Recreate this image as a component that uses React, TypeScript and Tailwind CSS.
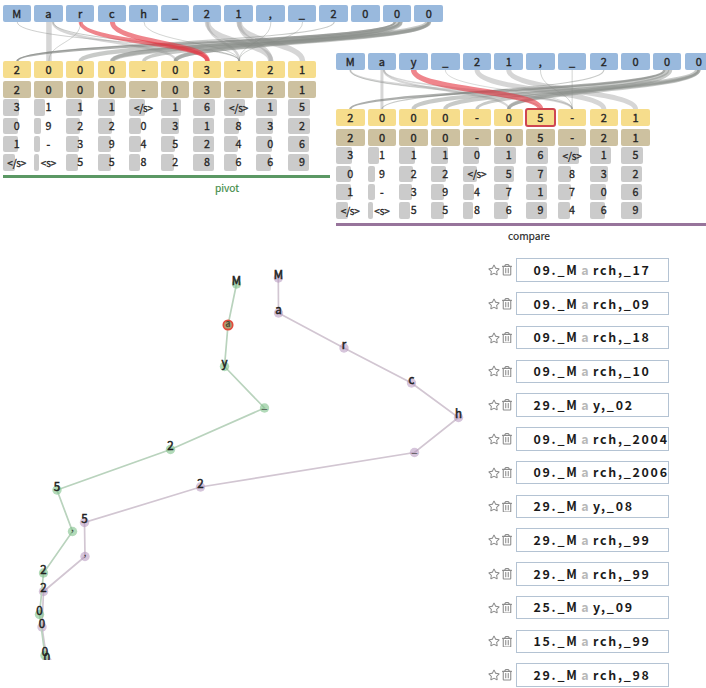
import React from "react";
import { FaRegStar, FaRegTrashAlt } from "react-icons/fa";

const PITCH = 31.7;
const HALF = 14.25;
const LINK_H = 39;

type Link = { from: number; to: number; w: number; tone?: "red" | "dark" | "light"; dx?: number };
type Cell = [string, number];

type PanelData = {
  source: string[];
  output: string[];
  beams: Cell[][];
  links: Link[];
  selected?: number;
};

const pivot: PanelData = {
  source: "March_21,_2000".split(""),
  output: "2000-03-21".split(""),
  beams: [
    [["3", 16.5], ["1", 10.7], ["1", 16], ["1", 17.5], ["</s>", 16], ["1", 20], ["6", 22], ["</s>", 21], ["1", 21], ["5", 22.3]],
    [["0", 15.5], ["9", 7.3], ["2", 13.7], ["2", 14], ["0", 12], ["3", 18.3], ["1", 21.7], ["8", 15], ["3", 17], ["2", 22]],
    [["1", 15.5], ["-", 6.3], ["3", 13.3], ["9", 13.3], ["4", 11.3], ["5", 14], ["2", 21.7], ["4", 14], ["0", 16], ["6", 21.7]],
    [["</s>", 12], ["<s>", 5.3], ["5", 11.7], ["5", 13.3], ["8", 10.7], ["2", 13], ["8", 21.3], ["6", 12.7], ["6", 15], ["9", 21.3]],
  ],
  links: [
    { from: 0, to: 7, w: 0.9 },
    { from: 1, to: 1, w: 5.5, tone: "light" },
    { from: 1, to: 5, w: 2.5, tone: "light", dx: 4 },
    { from: 1, to: 7, w: 1, dx: 4 },
    { from: 2, to: 1, w: 0.8 },
    { from: 4, to: 7, w: 0.8 },
    { from: 6, to: 8, w: 5.5, tone: "light" },
    { from: 6, to: 7, w: 2.5, tone: "light" },
    { from: 7, to: 9, w: 5.5, tone: "light" },
    { from: 7, to: 8, w: 4, tone: "light" },
    { from: 8, to: 7, w: 0.8 },
    { from: 9, to: 7, w: 0.8 },
    { from: 10, to: 0, w: 1.2 },
    { from: 12, to: 0, w: 2.4, tone: "dark", dx: -3 },
    { from: 12, to: 2, w: 4.4, dx: 0 },
    { from: 13, to: 3, w: 4.6, dx: -2 },
    { from: 12, to: 3, w: 3.6, dx: 3 },
    { from: 13, to: 4, w: 3.8 },
    { from: 13, to: 5, w: 3.6 },
    { from: 12, to: 5, w: 4.4, dx: 3 },
    { from: 2, to: 6, w: 4, tone: "red" },
    { from: 3, to: 6, w: 4.8, tone: "red" },
  ],
};

const compare: PanelData = {
  source: "May_21,_2000".split(""),
  output: "2000-05-21".split(""),
  beams: [
    [["3", 16], ["1", 11], ["1", 16], ["1", 16.5], ["0", 16], ["1", 21.5], ["6", 22], ["</s>", 21], ["1", 21], ["5", 22]],
    [["0", 15], ["9", 7.7], ["2", 13.7], ["2", 14.7], ["</s>", 14], ["5", 19.3], ["7", 21.3], ["8", 13], ["3", 18], ["2", 21]],
    [["1", 15], ["-", 7], ["3", 13], ["9", 13], ["4", 11], ["7", 15], ["1", 21], ["7", 13], ["0", 16], ["6", 21]],
    [["</s>", 12], ["<s>", 5.3], ["5", 11], ["5", 13], ["8", 10.7], ["6", 14], ["9", 21], ["4", 12.3], ["6", 15], ["9", 21]],
  ],
  selected: 6,
  links: [
    { from: 0, to: 7, w: 2, tone: "light" },
    { from: 0, to: 6, w: 0.8 },
    { from: 1, to: 1, w: 3, tone: "light" },
    { from: 1, to: 5, w: 2.2, tone: "light", dx: 2 },
    { from: 1, to: 7, w: 1.5, tone: "light", dx: 2 },
    { from: 3, to: 7, w: 0.7 },
    { from: 4, to: 8, w: 5, tone: "light" },
    { from: 5, to: 9, w: 5, tone: "light" },
    { from: 6, to: 7, w: 0.8 },
    { from: 7, to: 7, w: 0.8 },
    { from: 8, to: 1, w: 1.2 },
    { from: 10, to: 0, w: 2.4, tone: "dark", dx: -3 },
    { from: 10, to: 2, w: 4.2, dx: 0 },
    { from: 11, to: 3, w: 4.2, dx: -2 },
    { from: 11, to: 4, w: 3.4 },
    { from: 11, to: 5, w: 3.2 },
    { from: 10, to: 5, w: 4, dx: 3 },
    { from: 2, to: 6, w: 5.5, tone: "red" },
  ],
};

const toneStyle = {
  red: "stroke-[#e5343f] opacity-60",
  dark: "stroke-[#747874] opacity-60",
  light: "stroke-[#999999] opacity-40",
  mid: "stroke-[#858985] opacity-45",
};

function Links({ links }: { links: Link[] }) {
  return (
    <svg width="440" height={LINK_H} className="block shrink-0 overflow-visible" fill="none">
      {links.map((l, i) => {
        const a = l.from * PITCH + HALF + (l.dx ?? 0);
        const b = l.to * PITCH + HALF;
        return (
          <path
            key={i}
            d={`M${a},0C${a},${LINK_H * 0.53} ${b},${LINK_H * 0.53} ${b},${LINK_H}`}
            strokeWidth={l.w}
            className={toneStyle[l.tone ?? "mid"]}
          />
        );
      })}
    </svg>
  );
}

function Row({ tokens, color, selected }: { tokens: string[]; color: string; selected?: number }) {
  return (
    <div className="flex gap-[3.2px]">
      {tokens.map((t, i) => (
        <div
          key={i}
          className={`flex h-[17px] w-[28.5px] shrink-0 items-center justify-center rounded-[2px] text-[11px] leading-none [-webkit-text-stroke:0.35px] ${color} ${
            i === selected ? "outline-2 -outline-offset-1 outline-[#cf4650]" : ""
          }`}
        >
          {t}
        </div>
      ))}
    </div>
  );
}

function BeamRow({ cells }: { cells: Cell[] }) {
  return (
    <div className="flex gap-[3.2px]">
      {cells.map(([t, w], i) => (
        <div
          key={i}
          className="grid h-[16.3px] w-[28.5px] shrink-0 items-center text-[10.7px] leading-none [-webkit-text-stroke:0.3px]"
        >
          <div className="col-start-1 row-start-1 h-full rounded-[2px] bg-[#cbcbcb]" style={{ width: w }} />
          <span className={`col-start-1 row-start-1 text-center ${t.length > 1 ? "text-[10px] tracking-[-0.2px]" : ""}`}>{t}</span>
        </div>
      ))}
    </div>
  );
}

function Panel({ data }: { data: PanelData }) {
  return (
    <div className="flex flex-col">
      <Row tokens={data.source} color="bg-[#99b9dd]" />
      <Links links={data.links} />
      <div className="flex flex-col gap-[3.4px]">
        <Row tokens={data.output} color="bg-[#f6dd8c]" selected={data.selected} />
        <Row tokens={data.output} color="bg-[#cdc1a0]" />
      </div>
      <div className="mt-[1.1px] flex flex-col gap-[2px]">
        {data.beams.map((b, i) => (
          <BeamRow key={i} cells={b} />
        ))}
      </div>
    </div>
  );
}

type Node = [number, number, string];

const greenNodes: Node[] = [
  [236.5, 284, "M"], [228, 325, "a"], [224.5, 366.5, "y"], [264.5, 408, "_"], [170.5, 449.5, "2"],
  [57, 490, "5"], [72.5, 531.5, ","], [43.5, 573, "2"], [39.5, 614.5, "0"], [45, 655.5, "0"],
];
const purpleNodes: Node[] = [
  [278.3, 278, "M"], [278.5, 313, "a"], [344, 348, "r"], [411.5, 383, "c"], [458.5, 417.5, "h"],
  [414.5, 452.5, "_"], [200.5, 487, "2"], [84.5, 522.5, "5"], [85, 556.5, ","], [43.5, 591.5, "2"],
  [42, 627, "0"], [47, 661, "0"],
];

function Trajectory({ nodes, line, dot }: { nodes: Node[]; line: string; dot: string }) {
  return (
    <g>
      <polyline points={nodes.map(([x, y]) => `${x},${y}`).join(" ")} fill="none" strokeWidth="1.7" className={line} />
      {nodes.map(([x, y], i) => (
        <circle key={i} cx={x} cy={y} r={4.7} className={dot} />
      ))}
    </g>
  );
}

function NodeLabels({ nodes, marked }: { nodes: Node[]; marked?: number }) {
  return (
    <g textAnchor="middle">
      {nodes.map(([x, y, t], i) => {
        if (i === marked) {
          return (
            <text key={i} x={x} y={y + 2} className="fill-[#4c4c35] text-[9px] font-bold">
              {t}
            </text>
          );
        }
        // Low glyphs sit inside their dot instead of on top of it.
        const low = t === "_" || t === ",";
        return (
          <text
            key={i}
            x={x}
            y={low ? y - 0.5 : y + 0.5}
            className={
              low
                ? "fill-[#3c3c3c] text-[10.5px]"
                : "fill-[#222222] stroke-[#222222] text-[11.5px] [stroke-width:0.5px]"
            }
          >
            {t}
          </text>
        );
      })}
    </g>
  );
}

const neighbors: [string, string][] = [
  ["09._M", "rch,_17"], ["09._M", "rch,_09"], ["09._M", "rch,_18"], ["09._M", "rch,_10"],
  ["29._M", "y,_02"], ["09._M", "rch,_2004"], ["09._M", "rch,_2006"], ["29._M", "y,_08"],
  ["29._M", "rch,_99"], ["29._M", "rch,_99"], ["25._M", "y,_09"], ["15._M", "rch,_99"], ["29._M", "rch,_98"],
];

export default function App() {
  return (
    <div className="flex h-[688px] w-[706px] flex-col overflow-hidden bg-white font-['Noto_Sans_CJK_SC',sans-serif] text-[#242424]">
      <div className="flex h-[250px] shrink-0">
        <section className="w-[336px] shrink-0 pt-[5px] pl-[2.5px]">
          <Panel data={pivot} />
          <div className="mt-[4.7px] h-[2.5px] w-[327.5px] bg-[#5b9864]" />
          <p className="mt-[3.5px] ml-[182.5px] w-[84px] text-center text-[10.2px] leading-[14px] text-[#3d8a45] [-webkit-text-stroke:0.15px]">pivot</p>
        </section>
        <section className="w-[370px] shrink-0 pt-[53px]">
          <Panel data={compare} />
          <div className="mt-[4.7px] h-[2.5px] w-full bg-[#97749b]" />
          <p className="mt-[3.5px] ml-[143px] w-[100px] text-center text-[10.2px] leading-[14px] [-webkit-text-stroke:0.15px]">compare</p>
        </section>
      </div>

      <div className="flex h-[438px] shrink-0">
        <svg width="488" height="410" viewBox="0 250 488 410" className="block shrink-0">
          <Trajectory nodes={purpleNodes} line="stroke-[#d2c6d2]" dot="fill-[#b596bd]/55" />
          <Trajectory nodes={greenNodes} line="stroke-[#b9d3bd]" dot="fill-[#7fc18a]/60" />
          <circle cx="228" cy="325" r="4.7" className="fill-[#b08858]/70 stroke-[#e34a3c]" strokeWidth="1.7" />
          <NodeLabels nodes={purpleNodes} />
          <NodeLabels nodes={greenNodes} marked={1} />
        </svg>
        <ul className="flex flex-col gap-[10.38px] pt-[8.3px]">
          {neighbors.map(([head, tail], i) => (
            <li key={i} className="flex h-[23.4px] shrink-0 items-center">
              <FaRegStar className="h-[12px] w-[12px] shrink-0 text-[#8c8c8c]" />
              <FaRegTrashAlt className="ml-[2px] h-[11.5px] w-[10px] shrink-0 text-[#8c8c8c]" />
              <div className="ml-[4px] flex h-full w-[153px] shrink-0 items-center border border-[#b4c3d3] pl-[16.5px] text-[12.4px] leading-none font-bold tracking-[1.75px] whitespace-nowrap text-[#1b1b1b]">
                <span className="w-[47.8px] shrink-0">{head}</span>
                <span className="w-[11.7px] shrink-0 text-[#b8b8b8]">a</span>
                <span>{tail}</span>
              </div>
            </li>
          ))}
        </ul>
      </div>
    </div>
  );
}
